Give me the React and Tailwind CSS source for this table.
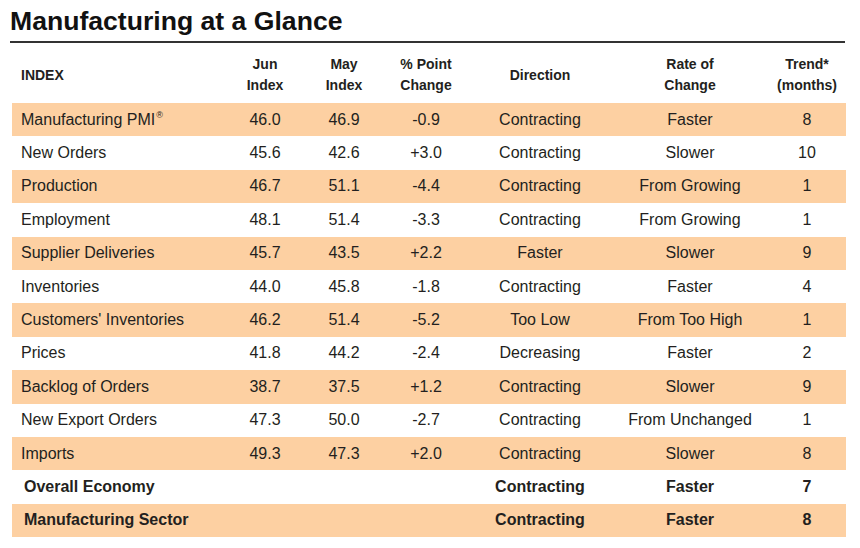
import React from 'react';

const rows = [
  { name: 'Manufacturing PMI', reg: true, jun: '46.0', may: '46.9', chg: '-0.9', dir: 'Contracting', rate: 'Faster', trend: '8' },
  { name: 'New Orders', jun: '45.6', may: '42.6', chg: '+3.0', dir: 'Contracting', rate: 'Slower', trend: '10' },
  { name: 'Production', jun: '46.7', may: '51.1', chg: '-4.4', dir: 'Contracting', rate: 'From Growing', trend: '1' },
  { name: 'Employment', jun: '48.1', may: '51.4', chg: '-3.3', dir: 'Contracting', rate: 'From Growing', trend: '1' },
  { name: 'Supplier Deliveries', jun: '45.7', may: '43.5', chg: '+2.2', dir: 'Faster', rate: 'Slower', trend: '9' },
  { name: 'Inventories', jun: '44.0', may: '45.8', chg: '-1.8', dir: 'Contracting', rate: 'Faster', trend: '4' },
  { name: "Customers' Inventories", jun: '46.2', may: '51.4', chg: '-5.2', dir: 'Too Low', rate: 'From Too High', trend: '1' },
  { name: 'Prices', jun: '41.8', may: '44.2', chg: '-2.4', dir: 'Decreasing', rate: 'Faster', trend: '2' },
  { name: 'Backlog of Orders', jun: '38.7', may: '37.5', chg: '+1.2', dir: 'Contracting', rate: 'Slower', trend: '9' },
  { name: 'New Export Orders', jun: '47.3', may: '50.0', chg: '-2.7', dir: 'Contracting', rate: 'From Unchanged', trend: '1' },
  { name: 'Imports', jun: '49.3', may: '47.3', chg: '+2.0', dir: 'Contracting', rate: 'Slower', trend: '8' },
  { name: 'Overall Economy', bold: true, jun: '', may: '', chg: '', dir: 'Contracting', rate: 'Faster', trend: '7' },
  { name: 'Manufacturing Sector', bold: true, jun: '', may: '', chg: '', dir: 'Contracting', rate: 'Faster', trend: '8' },
];

const cols = 'grid grid-cols-[214px_78px_80px_84px_144px_156px_78px]';

const App = () => {
  return (
    <div className="w-[860px] h-[548px] bg-white text-[#231f20] font-['Liberation_Sans',Arial,sans-serif] overflow-hidden">
      <h1 className="pl-[10px] pt-[4px] h-[41px] text-[26.6px] leading-[34px] font-bold text-[#111]">
        Manufacturing at a Glance
      </h1>
      <div className="ml-[10px] w-[835px] h-[2px] bg-[#333]" />

      <div className="ml-[12px] w-[834px]">
        {/* Header */}
        <div className={`${cols} h-[60px] items-center text-[14px] leading-[21px] font-bold pt-[4px]`}>
          <div className="pl-[9px]">INDEX</div>
          <div className="text-center">Jun<br />Index</div>
          <div className="text-center">May<br />Index</div>
          <div className="text-center">% Point<br />Change</div>
          <div className="text-center">Direction</div>
          <div className="text-center">Rate of<br />Change</div>
          <div className="text-center">Trend*<br />(months)</div>
        </div>

        {/* Rows */}
        {rows.map((r, i) => (
          <div
            key={i}
            className={`${cols} h-[33.4px] items-center text-[16px] ${i % 2 === 0 ? 'bg-[#fdd0a2]' : 'bg-white'} ${r.bold ? 'font-bold' : ''}`}
          >
            <div className={r.bold ? 'pl-[12px]' : 'pl-[9px]'}>
              {r.name}
              <span className={r.reg ? 'text-[9px] align-top relative top-[1px] ml-[1px]' : 'hidden'}>®</span>
            </div>
            <div className="text-center">{r.jun}</div>
            <div className="text-center">{r.may}</div>
            <div className="text-center">{r.chg}</div>
            <div className="text-center">{r.dir}</div>
            <div className="text-center">{r.rate}</div>
            <div className="text-center">{r.trend}</div>
          </div>
        ))}
      </div>
    </div>
  );
};

export default App;
